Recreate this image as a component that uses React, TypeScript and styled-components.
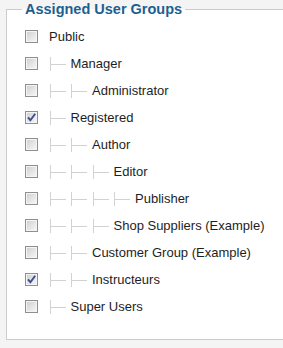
import React from "react";
import styled, { createGlobalStyle } from "styled-components";

const Global = createGlobalStyle`
  html, body { margin: 0; padding: 0; background: #f4f4f4; }
  body { font-family: "Liberation Sans", Arial, sans-serif; overflow: hidden; }
`;

const Page = styled.div`
  width: 283px;
  height: 348px;
  padding-left: 6px;
  box-sizing: border-box;
  overflow: hidden;
`;

const Fieldset = styled.fieldset`
  margin: 0;
  width: 320px;
  box-sizing: border-box;
  border: 1px solid #cccccc;
  background: #ffffff;
  padding: 5px 0 19px 15px;
`;

const Legend = styled.legend`
  padding: 0 3px;
  height: 18px;
  line-height: 18px;
  font-size: 14.5px;
  font-weight: bold;
  color: #1d5f8f;
  background: transparent;
`;

const List = styled.ul`
  list-style: none;
  margin: 0;
  padding: 0 0 0 3px;
  display: flex;
  flex-direction: column;
`;

const Row = styled.li`
  height: 27px;
  display: flex;
  align-items: center;
`;

const Box = styled.span<{ $checked?: boolean }>`
  width: 13px;
  height: 13px;
  box-sizing: border-box;
  border: 1px solid #8f8f8f;
  background: linear-gradient(135deg, #cdcdcd 0%, #e8e8e8 60%, #f8f8f8 100%);
  box-shadow: inset 0 0 0 1px #f4f4f4;
  display: flex;
  align-items: center;
  justify-content: center;
  margin-right: 11px;
  flex: none;
`;

const Marker = styled.span`
  position: relative;
  width: 21.5px;
  height: 14px;
  flex: none;
  &::before {
    content: "";
    position: absolute;
    left: 0.5px;
    top: 0;
    width: 1px;
    height: 14px;
    background: #d2d2d2;
  }
  &::after {
    content: "";
    position: absolute;
    left: 1.5px;
    top: 7.5px;
    width: 15px;
    height: 1px;
    background: #d2d2d2;
  }
`;

const Label = styled.span`
  font-size: 13px;
  color: #1e1e1e;
  white-space: nowrap;
`;

const Check = () => (
  <svg width="9" height="9" viewBox="0 0 9 9">
    <path d="M1 4.3 L3.4 7.2 L8.2 0.8" fill="none" stroke="#3a4f8c" strokeWidth="1.9" />
  </svg>
);

const groups: { name: string; level: number; checked?: boolean }[] = [
  { name: "Public", level: 0 },
  { name: "Manager", level: 1 },
  { name: "Administrator", level: 2 },
  { name: "Registered", level: 1, checked: true },
  { name: "Author", level: 2 },
  { name: "Editor", level: 3 },
  { name: "Publisher", level: 4 },
  { name: "Shop Suppliers (Example)", level: 3 },
  { name: "Customer Group (Example)", level: 2 },
  { name: "Instructeurs", level: 2, checked: true },
  { name: "Super Users", level: 1 },
];

export default function App() {
  return (
    <>
      <Global />
      <Page>
        <Fieldset>
          <Legend>Assigned User Groups</Legend>
          <List>
            {groups.map((g) => (
              <Row key={g.name}>
                <Box $checked={g.checked}>{g.checked && <Check />}</Box>
                {Array.from({ length: g.level }).map((_, i) => (
                  <Marker key={i} />
                ))}
                <Label>{g.name}</Label>
              </Row>
            ))}
          </List>
        </Fieldset>
      </Page>
    </>
  );
}
